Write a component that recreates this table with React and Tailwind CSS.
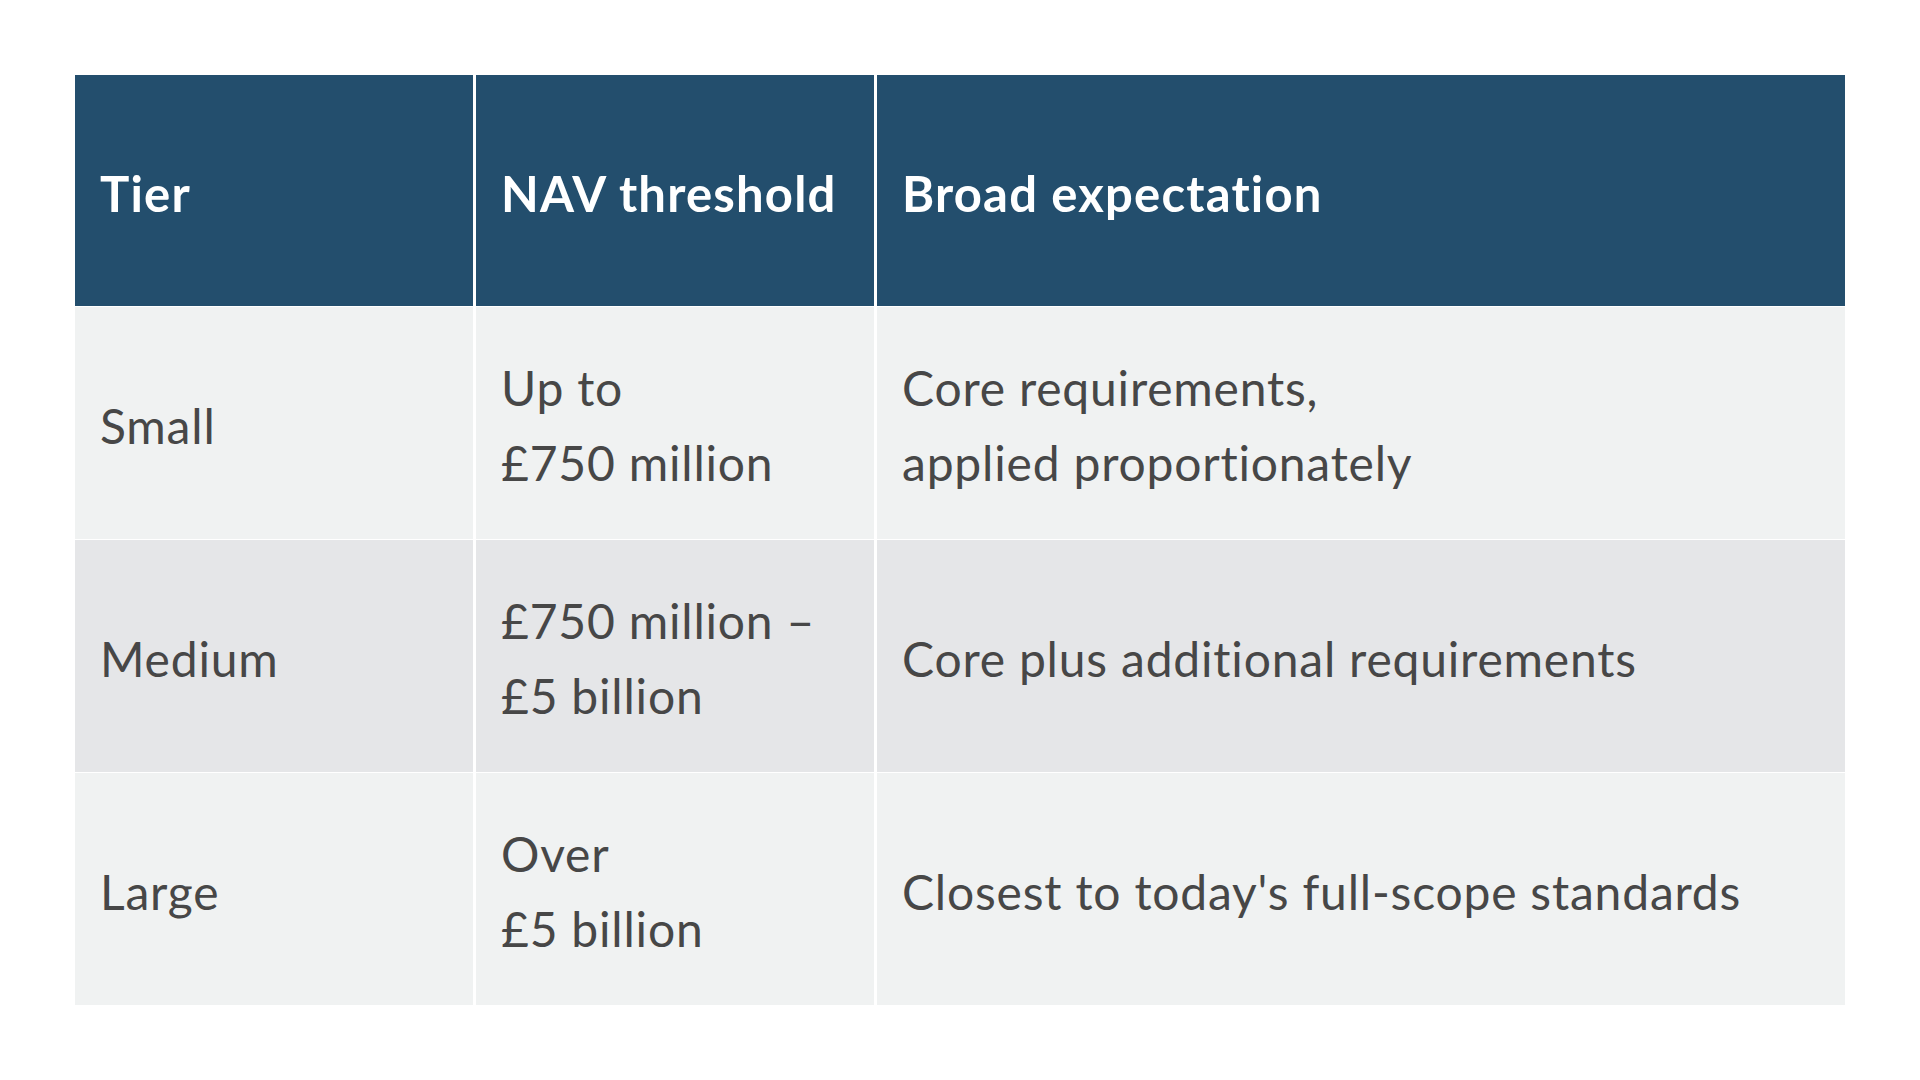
const rows = [
  { tier: "Small", nav: ["Up to", "£750 million"], expectation: ["Core requirements,", "applied proportionately"], shade: "bg-[#f0f2f2]" },
  { tier: "Medium", nav: ["£750 million –", "£5 billion"], expectation: ["Core plus additional requirements"], shade: "bg-[#e5e6e8]" },
  { tier: "Large", nav: ["Over", "£5 billion"], expectation: ["Closest to today's full-scope standards"], shade: "bg-[#f0f2f2]" },
];

function Lines({ lines }) {
  return (
    <div>
      {lines.map((line) => (
        <div key={line}>{line}</div>
      ))}
    </div>
  );
}

const cell = "h-[232px] flex items-center pl-[25px] pt-[4px] text-[#474747] text-[48px] leading-[75px] tracking-[0.8px]";

export default function App() {
  return (
    <div className="w-[1920px] h-[1080px] bg-white pt-[75px] pl-[75px] font-['Lato',sans-serif]">
      <div className="w-[1770px] grid grid-cols-[398px_398px_968px] gap-x-[3px] gap-y-px bg-white">
        {["Tier", "NAV threshold", "Broad expectation"].map((h) => (
          <div
            key={h}
            className="h-[231px] bg-[#234e6d] flex items-center pl-[25px] pt-[6px] text-white font-bold text-[49px] tracking-[1.2px]"
          >
            {h}
          </div>
        ))}
        {rows.map((row) => (
          <div key={row.tier} className="contents">
            <div className={`${row.shade} ${cell}`}>{row.tier}</div>
            <div className={`${row.shade} ${cell}`}>
              <Lines lines={row.nav} />
            </div>
            <div className={`${row.shade} ${cell}`}>
              <Lines lines={row.expectation} />
            </div>
          </div>
        ))}
      </div>
    </div>
  );
}
